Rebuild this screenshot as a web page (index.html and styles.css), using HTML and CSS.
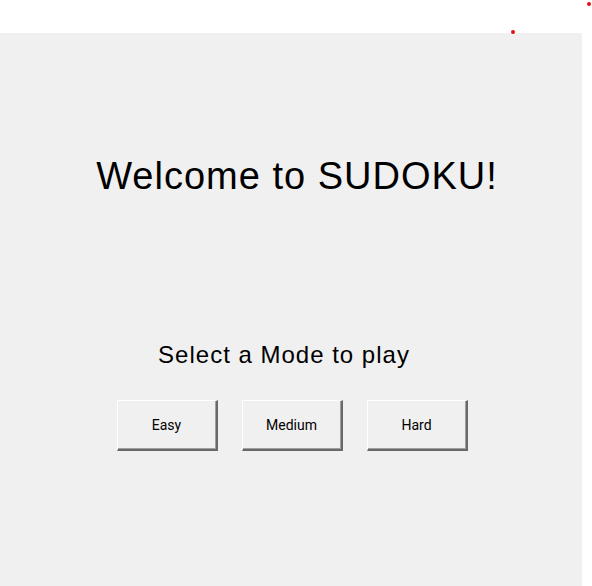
FILE: index.html
```html
<!DOCTYPE html>
<html>
<head>
<meta charset="utf-8">
<link rel="stylesheet" href="styles.css">
</head>
<body>
<span class="dot dot-a"></span>
<span class="dot dot-b"></span>
<main class="panel">
  <h1 class="title">Welcome to SUDOKU!</h1>
  <p class="prompt">Select a Mode to play</p>
  <div class="modes">
    <button class="btn">Easy</button>
    <button class="btn">Medium</button>
    <button class="btn">Hard</button>
  </div>
</main>
</body>
</html>
```
FILE: styles.css
```css
html, body {
  margin: 0;
  padding: 0;
  background: #ffffff;
  width: 592px;
  height: 586px;
  overflow: hidden;
}
body {
  position: relative;
  font-family: "Liberation Sans", Arial, sans-serif;
  padding-top: 33px;
  box-sizing: border-box;
}
.panel {
  width: 582px;
  height: 553px;
  background: #f0f0f0;
  display: flex;
  flex-direction: column;
  align-items: center;
  padding-top: 123px;
  box-sizing: border-box;
}
.title {
  margin: 0;
  font-weight: normal;
  font-size: 38px;
  letter-spacing: 1px;
  line-height: 40px;
  color: #000;
  padding-left: 12px;
}
.prompt {
  margin: 147px 0 0;
  font-size: 24px;
  letter-spacing: 1px;
  line-height: 24px;
  color: #000;
  padding-right: 14px;
}
.modes {
  margin-top: 33px;
  display: flex;
  gap: 24px;
  padding-left: 2px;
}
.btn {
  width: 101px;
  height: 51px;
  box-sizing: border-box;
  background: #f0f0f0;
  font-family: Roboto, "Liberation Sans", sans-serif;
  font-size: 14px;
  color: #000;
  padding: 0;
  border-style: solid;
  border-width: 1px 2px 2px 1px;
  border-color: #ffffff #696969 #696969 #ffffff;
  box-shadow: inset -1px -1px 0 #a0a0a0;
}
.dot {
  position: absolute;
  width: 4px;
  height: 4px;
  border-radius: 50%;
  background: #e81010;
}
.dot-a { left: 587px; top: 2px; }
.dot-b { left: 511px; top: 30px; }
```
